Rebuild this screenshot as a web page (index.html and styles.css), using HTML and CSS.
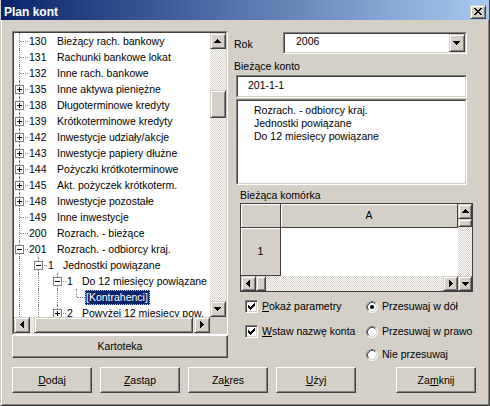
FILE: index.html
```html
<!DOCTYPE html>
<html lang="pl">
<head>
<meta charset="utf-8">
<title>Plan kont</title>
<link rel="stylesheet" href="styles.css">
</head>
<body>
<svg class="defs" width="0" height="0" aria-hidden="true">
  <defs>
    <symbol id="up" viewBox="0 0 7 4"><path d="M3 0h1v1h1v1h1v1h1v1H0V3h1V2h1V1h1z"/></symbol>
    <symbol id="dn" viewBox="0 0 7 4"><path d="M0 0h7v1h-1v1h-1v1h-1v1h-1v-1h-1v-1h-1v-1h-1z"/></symbol>
    <symbol id="lt" viewBox="0 0 4 7"><path d="M3 0h1v7h-1v-1h-1v-1h-1v-1h-1v-1h1v-1h1v-1h1z"/></symbol>
    <symbol id="rt" viewBox="0 0 4 7"><path d="M0 0h1v1h1v1h1v1h1v1h-1v1h-1v1h-1v1h-1z"/></symbol>
    <symbol id="x" viewBox="0 0 8 7"><path d="M0 0h2v1h-2zM6 0h2v1h-2zM1 1h2v1h-2zM5 1h2v1h-2zM2 2h4v1h-4zM3 3h2v1h-2zM2 4h4v1h-4zM1 5h2v1h-2zM5 5h2v1h-2zM0 6h2v1h-2zM6 6h2v1h-2z"/></symbol>
    <symbol id="check" viewBox="0 0 7 7"><path d="M6 0h1v1h-1zM5 1h2v1h-2zM0 2h1v1h-1zM4 2h3v1h-3zM0 3h2v1h-2zM3 3h3v1h-3zM0 4h5v1h-5zM1 5h3v1h-3zM2 6h1v1h-1z"/></symbol>
    <symbol id="radio" viewBox="0 0 12 12">
      <circle cx="6" cy="6" r="5" fill="#fff"/>
      <path d="M2.11 9.89A5.5 5.5 0 0 1 9.89 2.11" fill="none" stroke="#808080"/>
      <path d="M9.89 2.11A5.5 5.5 0 0 1 2.11 9.89" fill="none" stroke="#fff"/>
      <path d="M2.82 9.18A4.5 4.5 0 0 1 9.18 2.82" fill="none" stroke="#404040"/>
      <path d="M9.18 2.82A4.5 4.5 0 0 1 2.82 9.18" fill="none" stroke="#d4d0c8"/>
    </symbol>
  </defs>
</svg>

<div class="window">
  <div class="titlebar">
    <span class="title">Plan kont</span>
    <span class="sbtn closebtn"><svg width="14" height="12"><use href="#x" x="3" y="2" width="8" height="7"/></svg></span>
  </div>

  <div class="client">
    <div class="main">
      <div class="left">
        <div class="tree">
          <div class="tree-in">
            <div class="rows">
              <div class="row"><span class="conn t"></span><span class="num">130</span><span>Bieżący rach. bankowy</span></div>
              <div class="row"><span class="conn t"></span><span class="num">131</span><span>Rachunki bankowe lokat</span></div>
              <div class="row"><span class="conn t"></span><span class="num">132</span><span>Inne rach. bankowe</span></div>
              <div class="row"><span class="conn t"><span class="box plus"></span></span><span class="num">135</span><span>Inne aktywa pieniężne</span></div>
              <div class="row"><span class="conn t"><span class="box plus"></span></span><span class="num">138</span><span>Długoterminowe kredyty</span></div>
              <div class="row"><span class="conn t"><span class="box plus"></span></span><span class="num">139</span><span>Krótkoterminowe kredyty</span></div>
              <div class="row"><span class="conn t"><span class="box plus"></span></span><span class="num">142</span><span>Inwestycje udziały/akcje</span></div>
              <div class="row"><span class="conn t"><span class="box plus"></span></span><span class="num">143</span><span>Inwestycje papiery dłużne</span></div>
              <div class="row"><span class="conn t"><span class="box plus"></span></span><span class="num">144</span><span>Pożyczki krótkoterminowe</span></div>
              <div class="row"><span class="conn t"><span class="box plus"></span></span><span class="num">145</span><span>Akt. pożyczek krótkoterm.</span></div>
              <div class="row"><span class="conn t"><span class="box plus"></span></span><span class="num">148</span><span>Inwestycje pozostałe</span></div>
              <div class="row"><span class="conn t"></span><span class="num">149</span><span>Inne inwestycje</span></div>
              <div class="row"><span class="conn t"></span><span class="num">200</span><span>Rozrach. - bieżące</span></div>
              <div class="row"><span class="conn t"><span class="box minus"></span></span><span class="num">201</span><span>Rozrach. - odbiorcy kraj.</span></div>
              <div class="row sub"><span class="pass"></span><span class="conn t"><span class="box minus"></span></span><span class="num">1</span><span>Jednostki powiązane</span></div>
              <div class="row sub"><span class="pass"></span><span class="pass"></span><span class="conn t"><span class="box minus"></span></span><span class="num">1</span><span>Do 12 miesięcy powiązane</span></div>
              <div class="row sub"><span class="pass"></span><span class="pass"></span><span class="pass"></span><span class="conn l"></span><span class="sel">[Kontrahenci]</span></div>
              <div class="row sub"><span class="pass"></span><span class="pass"></span><span class="conn t"><span class="box plus"></span></span><span class="num">2</span><span>Powyżej 12 miesięcy pow.</span></div>
            </div>
            <div class="vscroll track">
              <span class="sbtn s16"><svg width="14" height="14"><use href="#up" x="3" y="5" width="7" height="4"/></svg></span>
              <span class="gap-v1"></span>
              <span class="sbtn thumb-v"></span>
              <span class="fill"></span>
              <span class="sbtn s16"><svg width="14" height="14"><use href="#dn" x="3" y="5" width="7" height="4"/></svg></span>
            </div>
            <div class="hscroll track">
              <span class="sbtn s16"><svg width="14" height="14"><use href="#lt" x="5" y="3" width="4" height="7"/></svg></span>
              <span class="gap-h1"></span>
              <span class="sbtn thumb-h"></span>
              <span class="fill"></span>
              <span class="sbtn s16"><svg width="14" height="14"><use href="#rt" x="5" y="3" width="4" height="7"/></svg></span>
            </div>
            <div class="corner-box"></div>
          </div>
        </div>
        <button class="btn wide">Kartoteka</button>
      </div>

      <div class="right">
        <div class="rok">
          <span class="lbl-rok">Rok</span>
          <div class="sunken combo">
            <div class="sunken-in combo-in">
              <span class="combo-val">2006</span>
              <span class="sbtn dd"><svg width="14" height="16"><use href="#dn" x="3" y="6" width="7" height="4"/></svg></span>
            </div>
          </div>
        </div>
        <div class="lbl lbl-konto">Bieżące konto</div>
        <div class="sunken input"><div class="sunken-in input-in">201-1-1</div></div>
        <div class="sunken memo"><div class="sunken-in memo-in">Rozrach. - odbiorcy kraj.<br>Jednostki powiązane<br>Do 12 miesięcy powiązane</div></div>
        <div class="lbl lbl-cell">Bieżąca komórka</div>
        <div class="sheet">
          <div class="hdr corner"></div>
          <div class="hdr colA">A</div>
          <div class="sv track">
            <span class="sbtn s15"><svg width="13" height="13"><use href="#up" x="3" y="4" width="7" height="4"/></svg></span>
            <span class="sbtn thumb-sv"></span>
            <span class="fill"></span>
            <span class="sbtn s15"><svg width="13" height="13"><use href="#dn" x="3" y="5" width="7" height="4"/></svg></span>
          </div>
          <div class="hdr rowhdr">1</div>
          <div class="cell"></div>
          <div class="sh track">
            <span class="sbtn s15"><svg width="13" height="13"><use href="#lt" x="4" y="3" width="4" height="7"/></svg></span>
            <span class="sbtn thumb-sh"></span>
            <span class="fill"></span>
            <span class="sbtn s15"><svg width="13" height="13"><use href="#rt" x="5" y="3" width="4" height="7"/></svg></span>
          </div>
        </div>
        <div class="opts">
          <div class="opt-col checks">
            <div class="opt"><span class="cbox"><svg width="7" height="7"><use href="#check"/></svg></span><span><u>P</u>okaż parametry</span></div>
            <div class="opt"><span class="cbox"><svg width="7" height="7"><use href="#check"/></svg></span><span><u>W</u>staw nazwę konta</span></div>
          </div>
          <div class="opt-col radios">
            <div class="opt"><span class="radio on"><svg width="12" height="12"><use href="#radio"/><circle cx="6" cy="6" r="2" fill="#000"/></svg></span><span>Przesuwaj w dół</span></div>
            <div class="opt"><span class="radio"><svg width="12" height="12"><use href="#radio"/></svg></span><span>Przesuwaj w prawo</span></div>
            <div class="opt last"><span class="radio"><svg width="12" height="12"><use href="#radio"/></svg></span><span>Nie przesuwaj</span></div>
          </div>
        </div>
      </div>
    </div>

    <div class="buttons">
      <button class="btn"><u>D</u>odaj</button>
      <button class="btn"><u>Z</u>astąp</button>
      <button class="btn">Za<u>k</u>res</button>
      <button class="btn"><u>U</u>żyj</button>
      <button class="btn push">Za<u>m</u>knij</button>
    </div>
  </div>
</div>
</body>
</html>
```

FILE: styles.css
```css
* { box-sizing: border-box; }
html, body { margin: 0; padding: 0; }
body {
  width: 490px;
  height: 406px;
  overflow: hidden;
  background: #d4d0c8;
  font: 10.5px/13px "Liberation Sans", Arial, sans-serif;
  color: #000;
}
.defs { position: absolute; width: 0; height: 0; overflow: hidden; }
svg { display: block; fill: #000; shape-rendering: crispEdges; }
.radio svg { shape-rendering: auto; }

.window {
  width: 490px;
  height: 406px;
  background: #d4d0c8;
  border-left: 1px solid #d4d0c8;
  border-right: 1px solid #404040;
  border-bottom: 1px solid #404040;
  box-shadow: inset 1px 0 #fff, inset -1px -1px #808080;
  display: flex;
  flex-direction: column;
}

.titlebar {
  height: 20px;
  flex: none;
  display: flex;
  align-items: center;
  justify-content: space-between;
  padding: 4px 3px 0 3px;
  background: linear-gradient(to right, #0a246a, #a6caf0);
  color: #fff;
  font: bold 12px/14px "Liberation Sans", Arial, sans-serif;
}
.closebtn { width: 16px; height: 14px; }

.sbtn {
  display: block;
  flex: none;
  background: #d4d0c8;
  border: 1px solid;
  border-color: #d4d0c8 #404040 #404040 #d4d0c8;
  box-shadow: inset 1px 1px #fff, inset -1px -1px #808080;
}

.client {
  flex: 1;
  padding: 11px 0 0 11px;
  display: flex;
  flex-direction: column;
}
.main {
  height: 336px;
  display: flex;
  gap: 6px;
}
.left { width: 216px; display: flex; flex-direction: column; }

/* sunken frames */
.tree, .sunken {
  border: 1px solid;
  border-color: #808080 #fff #fff #808080;
}
.tree-in, .sunken-in {
  border: 1px solid;
  border-color: #404040 #d4d0c8 #d4d0c8 #404040;
  background: #fff;
  height: 100%;
}
.tree { width: 216px; height: 304px; }
.tree-in {
  display: grid;
  grid-template-columns: 196px 16px;
  grid-template-rows: 284px 16px;
}
.rows { overflow: hidden; background: #fff; }
.row {
  display: flex;
  align-items: center;
  height: 16px;
  line-height: 16px;
  white-space: nowrap;
}
.pass, .conn { flex: none; height: 16px; position: relative; }
.pass { width: 19px; }
.conn { width: 15px; }
.pass::before, .conn::before {
  content: "";
  position: absolute;
  left: 5px;
  top: 0;
  height: 16px;
  border-left: 1px dotted #808080;
}
.conn.l::before { height: 8px; }
.conn::after {
  content: "";
  position: absolute;
  left: 6px;
  top: 8px;
  width: 8px;
  border-top: 1px dotted #808080;
}
.box {
  position: absolute;
  left: 1px;
  top: 4px;
  width: 9px;
  height: 9px;
  border: 1px solid #808080;
  background: #fff;
  z-index: 1;
}
.box::before, .box.plus::after {
  content: "";
  position: absolute;
  background: #000;
}
.box::before { left: 1px; top: 3px; width: 5px; height: 1px; }
.box.plus::after { left: 3px; top: 1px; width: 1px; height: 5px; }
.num { width: 28px; flex: none; }
.sub .num { width: 15px; }
.sel {
  display: inline-block;
  height: 15px;
  line-height: 15px;
  padding: 0 2px 0 1px;
  margin-left: -1px;
  background: #0a246a;
  color: #fff;
  outline: 1px dotted #c8c8a0;
  outline-offset: -1px;
}

.track {
  background-color: #fff;
  background-image: repeating-conic-gradient(#d4d0c8 0 25%, #fff 0 50%);
  background-size: 2px 2px;
}
.vscroll { display: flex; flex-direction: column; }
.hscroll { display: flex; }
.s16 { width: 16px; height: 16px; }
.gap-v1 { height: 41px; flex: none; }
.thumb-v { width: 16px; height: 28px; }
.gap-h1 { width: 4px; flex: none; }
.thumb-h { width: 159px; height: 16px; }
.fill { flex: 1; }
.corner-box { background: #d4d0c8; }

.btn {
  display: block;
  margin: 0;
  padding: 0;
  font: inherit;
  color: #000;
  text-align: center;
  background: #d4d0c8;
  border: 1px solid;
  border-color: #fff #404040 #404040 #fff;
  box-shadow: inset -1px -1px #808080;
  width: 80px;
  height: 26px;
}
.btn.wide { width: 216px; height: 23px; }
.btn u, .opt u { text-decoration: underline; text-underline-offset: 1px; }

/* right column */
.right { width: 248px; display: flex; flex-direction: column; }
.rok { display: flex; margin-top: 1px; height: 22px; }
.lbl-rok { width: 49px; padding-top: 6px; }
.combo { width: 184px; height: 22px; }
.combo-in { display: flex; }
.combo-val { flex: 1; padding-left: 11px; line-height: 14px; }
.dd { width: 16px; height: 18px; }
.lbl { height: 13px; line-height: 13px; }
.lbl-konto { margin-top: 6px; }
.input { margin-top: 2px; margin-left: 2px; width: 231px; height: 23px; }
.input-in { padding-left: 10px; line-height: 17px; }
.memo { margin-top: 1px; margin-left: 2px; width: 231px; height: 86px; }
.memo-in { padding: 3px 0 0 16px; line-height: 13px; }
.lbl-cell { margin-top: 4px; margin-left: 6px; }

.sheet {
  margin-top: 1px;
  margin-left: 6px;
  width: 233px;
  height: 89px;
  border: 1px solid #404040;
  display: grid;
  grid-template-columns: 40px 177px 14px;
  grid-template-rows: 24px 48px 15px;
}
.hdr {
  background: #d4d0c8;
  border-right: 1px solid #404040;
  border-bottom: 1px solid #404040;
  box-shadow: inset 1px 1px #fff;
  display: flex;
  align-items: center;
  justify-content: center;
}
.corner { grid-column: 1; grid-row: 1; }
.colA { grid-column: 2; grid-row: 1; }
.rowhdr { grid-column: 1; grid-row: 2; }
.cell { grid-column: 2; grid-row: 2; background: #fff; }
.sv { grid-column: 3; grid-row: 1 / 4; display: flex; flex-direction: column; }
.sh { grid-column: 1 / 3; grid-row: 3; display: flex; }
.s15 { width: 15px; height: 15px; }
.sv .s15 { width: 14px; }
.thumb-sv { width: 14px; height: 8px; }
.thumb-sh { width: 10px; height: 15px; }

.opts { display: flex; margin-top: 7px; margin-left: 11px; }
.opt-col { display: flex; flex-direction: column; gap: 10px; }
.checks { width: 121px; }
.opt { display: flex; align-items: center; height: 15px; white-space: nowrap; }
.radios .opt.last { margin-top: -2px; }
.cbox {
  flex: none;
  width: 13px;
  height: 13px;
  padding: 2px;
  margin-right: 4px;
  background: #fff;
  border: 1px solid;
  border-color: #808080 #fff #fff #808080;
  box-shadow: inset 1px 1px #404040, inset -1px -1px #d4d0c8;
}
.radio { flex: none; width: 12px; height: 12px; margin-right: 4px; }

.buttons {
  width: 464px;
  display: flex;
  gap: 8px;
}
.btn.push { margin-left: 32px; }
```
